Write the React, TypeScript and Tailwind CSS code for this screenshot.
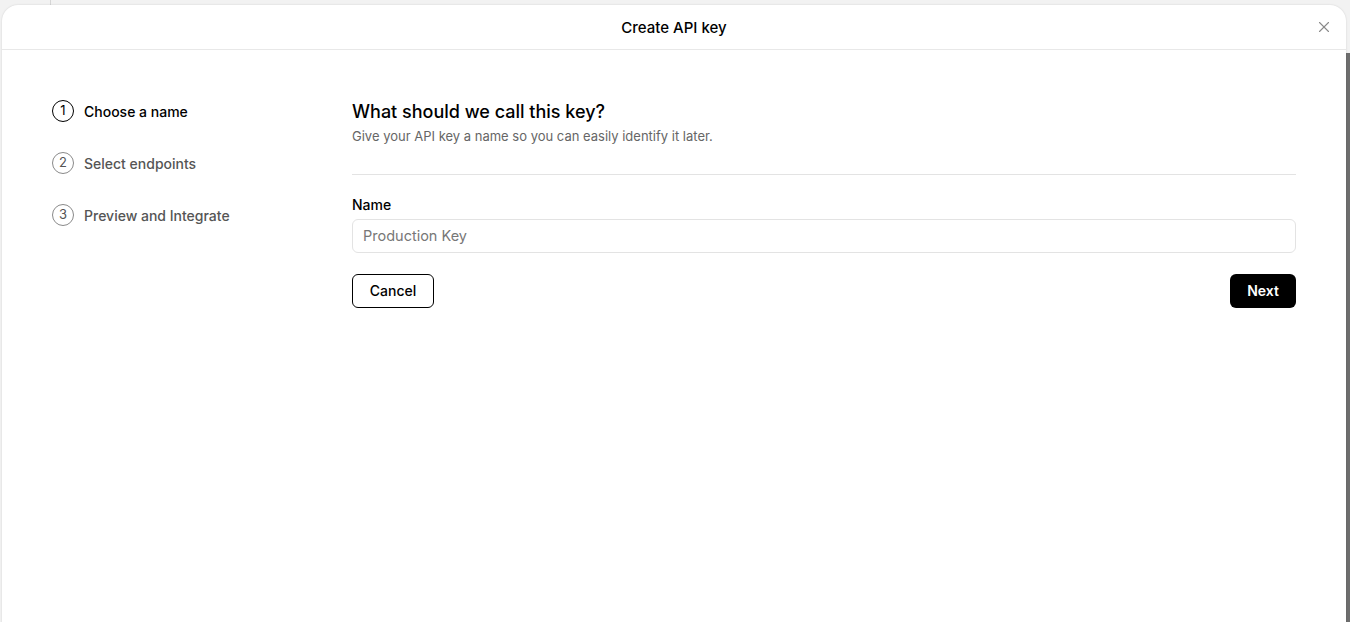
import { X } from "lucide-react";

const steps = ["Choose a name", "Select endpoints", "Preview and Integrate"];

function Step({ n, label, active }: { n: number; label: string; active: boolean }) {
  return (
    <div className="flex items-center gap-[10px] h-[22px]">
      <div
        className={`w-[22px] h-[22px] rounded-full border flex items-center justify-center text-[13px] ${
          active ? "border-black text-black" : "border-[#8a8a8a] text-[#555]"
        }`}
      >
        {n}
      </div>
      <span className={`text-[14px] font-medium ${active ? "text-black" : "text-[#555]"}`}>{label}</span>
    </div>
  );
}

export default function App() {
  return (
    <div className="relative w-[1350px] h-[622px] overflow-hidden bg-[#f2f2f2]" style={{ fontFamily: "Inter, 'Liberation Sans', sans-serif" }}>
      <div className="absolute left-[50px] top-0 w-px h-[6px] bg-[#d6d6d6]" />
      <div className="absolute right-0 top-[53px] w-[4px] h-[569px] bg-[#6e6e6e]" />
      <div className="absolute left-[2px] top-[5px] w-[1344px] h-[640px] bg-white rounded-[16px] shadow-[0_0_2px_rgba(0,0,0,0.15)] flex flex-col">
        <header className="relative h-[45px] border-b border-[#e8e8e8] flex items-center justify-center">
          <h1 className="text-[15px] font-medium text-black pt-[2px]">Create API key</h1>
          <button className="absolute right-[13px] top-[13px] text-[#8a8a8a]">
            <X size={18} strokeWidth={1.5} />
          </button>
        </header>
        <div className="flex px-[50px] pt-[50px]">
          <div className="w-[300px] flex flex-col gap-[30px]">
            {steps.map((s, i) => (
              <Step key={s} n={i + 1} label={s} active={i === 0} />
            ))}
          </div>
          <div className="flex-1">
            <h2 className="text-[18px] font-medium text-black leading-[22px] mt-[1px]">What should we call this key?</h2>
            <p className="text-[13px] text-[#666] mt-[4px]">Give your API key a name so you can easily identify it later.</p>
            <div className="border-t border-[#e3e3e3] mt-[27px]" />
            <label className="block text-[14px] font-medium text-black mt-[19px]">Name</label>
            <input
              placeholder="Production Key"
              className="mt-[4px] w-full h-[34px] rounded-[6px] border border-[#e3e3e3] px-[10px] text-[14.5px] placeholder:text-[#777] outline-none"
            />
            <div className="flex justify-between mt-[21px]">
              <button className="h-[34px] w-[82px] rounded-[6px] border border-black text-[14px] font-medium text-black">Cancel</button>
              <button className="h-[34px] w-[66px] rounded-[6px] bg-black text-[14px] font-semibold text-white">Next</button>
            </div>
          </div>
        </div>
      </div>
    </div>
  );
}
